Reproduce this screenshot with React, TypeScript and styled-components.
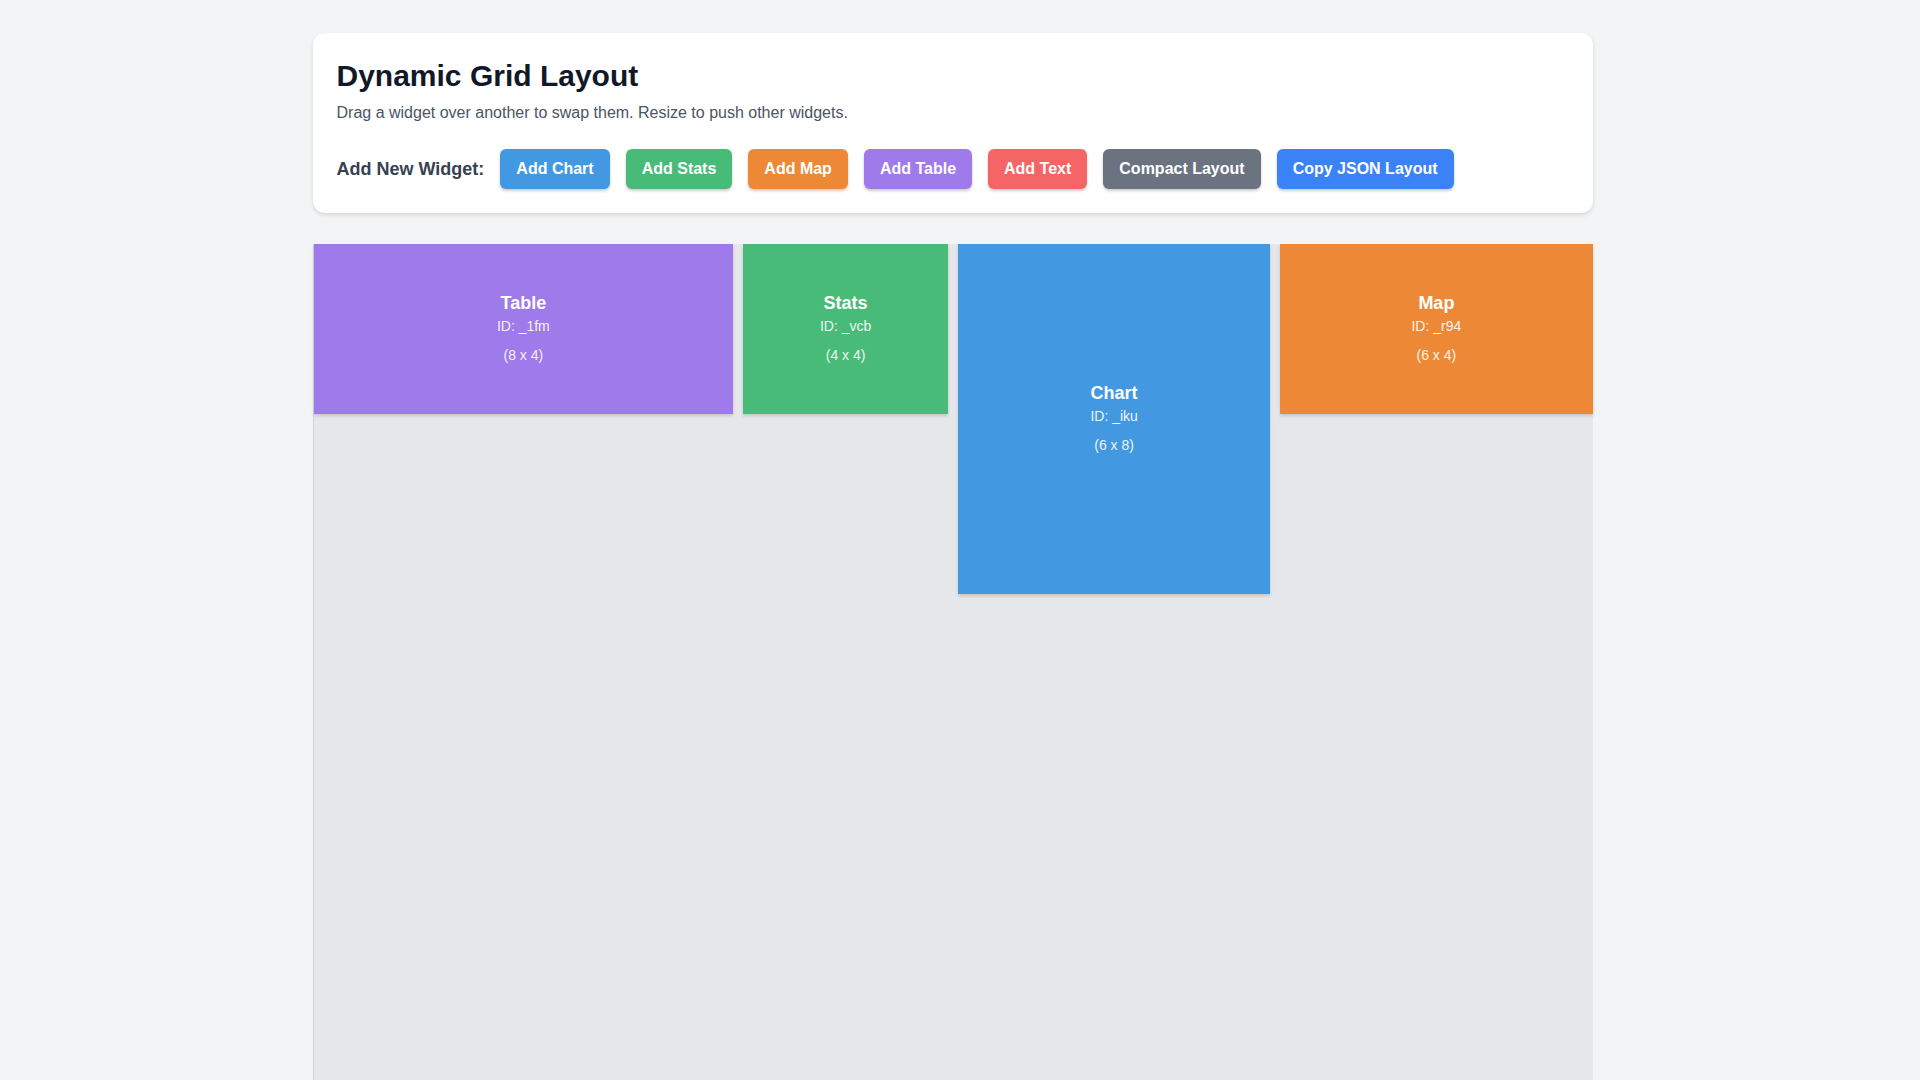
import React from "react";
import styled, { createGlobalStyle } from "styled-components";

const Global = createGlobalStyle`
  html, body { margin: 0; padding: 0; background: #f3f4f6; font-family: "Liberation Sans", Arial, sans-serif; }
`;

const Shell = styled.div`
  width: calc(100% - 15px);
`;

const Page = styled.div`
  width: 1280px;
  margin: 0 auto;
  padding: 33px 0 0;
`;

const Card = styled.div`
  background: #fff;
  border-radius: 12px;
  padding: 24px 24px 24px;
  box-shadow: 0 2px 4px rgba(0,0,0,0.12);
  margin-bottom: 31px;
`;

const Title = styled.h1`
  margin: 0;
  font-size: 30px;
  line-height: 38px;
  font-weight: 700;
  color: #111827;
`;

const Desc = styled.p`
  margin: 6px 0 0;
  font-size: 16px;
  line-height: 24px;
  color: #4b5563;
`;

const Toolbar = styled.div`
  display: flex;
  align-items: center;
  gap: 16px;
  margin-top: 24px;
`;

const Label = styled.span`
  font-size: 18px;
  font-weight: 700;
  color: #374151;
`;

const Button = styled.button<{ $bg: string }>`
  background: ${(p) => p.$bg};
  color: #fff;
  border: none;
  border-radius: 6px;
  height: 40px;
  padding: 0 16px;
  font-family: inherit;
  font-size: 16px;
  font-weight: 700;
  box-shadow: 0 2px 3px rgba(0,0,0,0.2);
`;

const Grid = styled.div`
  display: grid;
  grid-template-columns: repeat(24, 1fr);
  grid-auto-rows: 35px;
  gap: 10px;
  background: #e5e7eb;
  border-left: 1px solid #d1d5db;
  min-height: 1900px;
  align-content: start;
`;

const Widget = styled.div<{ $bg: string }>`
  background: ${(p) => p.$bg};
  color: #fff;
  display: flex;
  flex-direction: column;
  align-items: center;
  justify-content: center;
  box-shadow: 0 2px 3px rgba(0,0,0,0.15);
  padding-bottom: 2px;
`;

const WTitle = styled.div`
  font-size: 18px;
  font-weight: 700;
  line-height: 24px;
`;
const WId = styled.div`
  font-size: 14px;
  line-height: 22px;
  opacity: 0.9;
`;
const WDim = styled.div`
  font-size: 14px;
  line-height: 20px;
  margin-top: 8px;
  opacity: 0.9;
`;

const widgets = [
  { t: "Table", id: "_1fm", x: 1, w: 8, h: 4, c: "#9f7aea" },
  { t: "Stats", id: "_vcb", x: 9, w: 4, h: 4, c: "#48bb78" },
  { t: "Chart", id: "_iku", x: 13, w: 6, h: 8, c: "#4299e1" },
  { t: "Map", id: "_r94", x: 19, w: 6, h: 4, c: "#ed8936" },
];

export default function App() {
  return (
    <>
      <Global />
      <Shell>
        <Page>
          <Card>
            <Title>Dynamic Grid Layout</Title>
            <Desc>Drag a widget over another to swap them. Resize to push other widgets.</Desc>
            <Toolbar>
              <Label>Add New Widget:</Label>
              <Button $bg="#4299e1">Add Chart</Button>
              <Button $bg="#48bb78">Add Stats</Button>
              <Button $bg="#ed8936">Add Map</Button>
              <Button $bg="#9f7aea">Add Table</Button>
              <Button $bg="#f56565">Add Text</Button>
              <Button $bg="#6b7280">Compact Layout</Button>
              <Button $bg="#3b82f6">Copy JSON Layout</Button>
            </Toolbar>
          </Card>
          <Grid>
            {widgets.map((w) => (
              <Widget
                key={w.id}
                $bg={w.c}
                style={{ gridColumn: `${w.x} / span ${w.w}`, gridRow: `1 / span ${w.h}` }}
              >
                <WTitle>{w.t}</WTitle>
                <WId>ID: {w.id}</WId>
                <WDim>({w.w} x {w.h})</WDim>
              </Widget>
            ))}
          </Grid>
        </Page>
      </Shell>
    </>
  );
}
